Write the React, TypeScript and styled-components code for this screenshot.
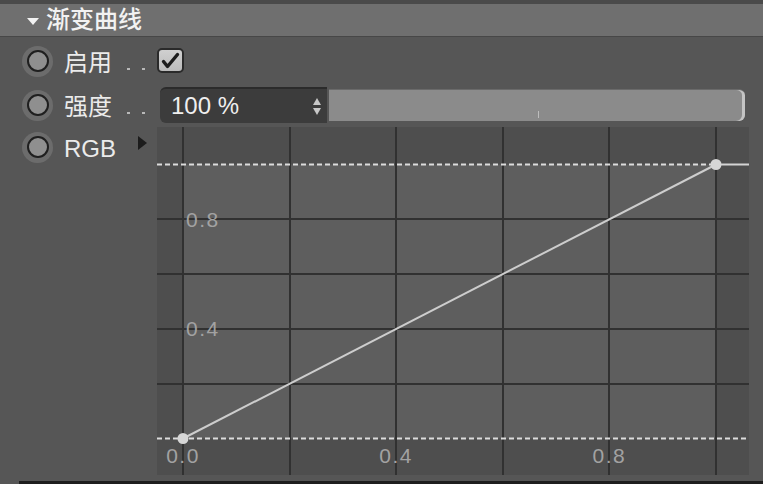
import React from "react";
import styled, { createGlobalStyle } from "styled-components";

const Global = createGlobalStyle`
  html, body { margin: 0; padding: 0; background: #565656; }
  #root { width: 763px; height: 484px; }
`;

const FONT = `"Liberation Sans", "Noto Sans CJK SC", Arial, sans-serif`;

const Panel = styled.div`
  width: 763px;
  height: 484px;
  overflow: hidden;
  background: #565656;
  border-top: 4px solid #4a4a4a;
  box-sizing: border-box;
  display: flex;
  flex-direction: column;
  font-family: ${FONT};
`;

const Header = styled.div`
  height: 32px;
  flex: none;
  background: #6f6f6f;
  border-bottom: 1px solid #474747;
  display: flex;
  align-items: center;
  padding-left: 27px;
  gap: 7px;
`;

const Caret = styled.span`
  width: 0;
  height: 0;
  border-left: 6px solid transparent;
  border-right: 6px solid transparent;
  border-top: 7px solid #f2f2f2;
  margin-top: 2px;
`;

const Title = styled.span`
  font-size: 24px;
  color: #f2f2f2;
  font-weight: 500;
  line-height: 1;
`;

const Row = styled.div<{ $h: number }>`
  display: grid;
  grid-template-columns: 157px 1fr;
  height: ${(p) => p.$h}px;
  flex: none;
`;

const ParamCell = styled.div`
  display: flex;
  align-items: center;
  padding-left: 22px;
`;

const Radio = styled.span`
  width: 31px;
  height: 31px;
  border-radius: 50%;
  background: #6c6c6c;
  display: flex;
  align-items: center;
  justify-content: center;
  flex: none;
  &::after {
    content: "";
    width: 18px;
    height: 18px;
    border-radius: 50%;
    border: 2px solid #1f1f1f;
    background: #8f8f8f;
  }
`;

const Label = styled.span<{ $w?: number }>`
  margin-left: 11px;
  width: ${(p) => p.$w ?? 48}px;
  font-size: 24px;
  line-height: 1;
  color: #ebebeb;
  white-space: nowrap;
  padding-top: 3px;
  flex: none;
`;

const Dots = styled.span`
  display: flex;
  gap: 12px;
  margin-left: 15px;
  margin-top: 16px;
  & > i {
    display: block;
    width: 3px;
    height: 2px;
    background: #b8b8b8;
  }
`;

const Arrow = styled.span`
  flex: none;
  width: 0;
  height: 0;
  border-top: 7px solid transparent;
  border-bottom: 7px solid transparent;
  border-left: 9px solid #1c1c1c;
  margin-left: 20px;
  margin-top: -8px;
`;

const ControlCell = styled.div`
  display: flex;
  align-items: center;
  padding-right: 18px;
`;

const Checkbox = styled.span`
  width: 27px;
  height: 25px;
  box-sizing: border-box;
  border: 2px solid #2a2a2a;
  border-radius: 5px;
  background: linear-gradient(#d0d0d0, #bbbbbb);
  display: flex;
  align-items: center;
  justify-content: center;
  margin-top: -2px;
`;

const ValueInput = styled.div`
  width: 167px;
  height: 36px;
  box-sizing: border-box;
  margin-left: 3px;
  background: #3c3c3c;
  border-radius: 6px 0 0 6px;
  border-top: 2px solid #2b2b2b;
  display: flex;
  align-items: center;
  padding-left: 11px;
  padding-right: 6px;
  font-size: 24px;
  color: #efefef;
`;

const ValueText = styled.span`
  flex: 1;
  line-height: 1;
`;

const Spinner = styled.span`
  display: flex;
  flex-direction: column;
  gap: 3px;
  & > i {
    display: block;
    width: 0;
    height: 0;
    border-left: 4px solid transparent;
    border-right: 4px solid transparent;
  }
  & > i:first-child { border-bottom: 7px solid #c8c8c8; }
  & > i:last-child { border-top: 7px solid #c8c8c8; }
`;

const Slider = styled.div`
  flex: 1;
  height: 32px;
  margin-left: 2px;
  box-sizing: border-box;
  background: #8b8b8b;
  border-top: 1px solid #6a6a6a;
  border-radius: 0 6px 6px 0;
  box-shadow: inset -3px 0 0 #c4c4c4;
  position: relative;
`;

const Tick = styled.span`
  position: absolute;
  left: 209px;
  top: 21px;
  width: 1px;
  height: 7px;
  background: #bdbdbd;
`;

const Lower = styled.div`
  display: grid;
  grid-template-columns: 157px 1fr;
  height: 348px;
  flex: none;
  margin-top: 2px;
`;

const SideCol = styled.div`
  display: flex;
  flex-direction: column;
`;

const GraphBox = styled.div`
  margin-right: 14px;
  background: #4e4e4e;
  & > svg { display: block; }
`;

const Footer = styled.div`
  flex: 1;
  display: flex;
  flex-direction: column;
  justify-content: flex-end;
  padding-left: 19px;
`;

const FooterBar = styled.div`
  height: 3px;
  background: #1e1e1e;
`;

const W = 592;
const H = 348;
const X0 = 26;
const X1 = 559;
const Y1 = 37.5;
const Y0 = 311.5;
const xs = Array.from({ length: 6 }, (_, i) => X0 + ((X1 - X0) * i) / 5);
const ys = Array.from({ length: 6 }, (_, i) => Y0 - ((Y0 - Y1) * i) / 5);

const Curve: React.FC = () => (
  <svg width={W} height={H} viewBox={`0 0 ${W} ${H}`}>
    <rect x={0} y={0} width={W} height={H} fill="#4e4e4e" />
    <rect x={X0} y={Y1} width={X1 - X0} height={Y0 - Y1} fill="#5e5e5e" />
    {xs.map((x, i) => (
      <line key={"v" + i} x1={Math.round(x)} x2={Math.round(x)} y1={0} y2={H} stroke="#313131" strokeWidth={2} />
    ))}
    {ys.slice(1, 5).map((y, i) => (
      <line key={"h" + i} x1={0} x2={W} y1={Math.round(y)} y2={Math.round(y)} stroke="#313131" strokeWidth={2} />
    ))}
    <line x1={0} x2={X1} y1={Y1} y2={Y1} stroke="#dcdcdc" strokeWidth={2} strokeDasharray="5 3" />
    <line x1={0} x2={W} y1={Y0} y2={Y0} stroke="#dcdcdc" strokeWidth={2} strokeDasharray="5 3" />
    <line x1={X0} y1={Y0} x2={X1} y2={Y1} stroke="#cdcdcd" strokeWidth={2} />
    <line x1={X1} y1={Y1} x2={W} y2={Y1} stroke="#d4d4d4" strokeWidth={2} />
    <circle cx={X0} cy={Y0} r={5.5} fill="#d6d6d6" />
    <circle cx={X1} cy={Y1} r={5.5} fill="#d6d6d6" />
    <g fontFamily={FONT} fontSize={21} fill="#a2a2a2" letterSpacing={1.5}>
      <text x={29} y={ys[4]} dominantBaseline="central">0.8</text>
      <text x={29} y={ys[2]} dominantBaseline="central">0.4</text>
      <text x={xs[0]} y={328} textAnchor="middle" dominantBaseline="central">0.0</text>
      <text x={xs[2]} y={328} textAnchor="middle" dominantBaseline="central">0.4</text>
      <text x={xs[4]} y={328} textAnchor="middle" dominantBaseline="central">0.8</text>
    </g>
  </svg>
);

export default function App() {
  return (
    <>
      <Global />
      <Panel>
        <Header>
          <Caret />
          <Title>渐变曲线</Title>
        </Header>
        <Row $h={48}>
          <ParamCell>
            <Radio />
            <Label>启用</Label>
            <Dots><i /><i /></Dots>
          </ParamCell>
          <ControlCell>
            <Checkbox>
              <svg width="19" height="17" viewBox="0 0 19 17">
                <path d="M2.5 9.5 L6.5 14.5 L16.5 2.5" fill="none" stroke="#1c1c1c" strokeWidth="3.4" strokeLinecap="round" strokeLinejoin="round" />
              </svg>
            </Checkbox>
          </ControlCell>
        </Row>
        <Row $h={40}>
          <ParamCell>
            <Radio />
            <Label>强度</Label>
            <Dots><i /><i /></Dots>
          </ParamCell>
          <ControlCell>
            <ValueInput>
              <ValueText>100 %</ValueText>
              <Spinner><i /><i /></Spinner>
            </ValueInput>
            <Slider>
              <Tick />
            </Slider>
          </ControlCell>
        </Row>
        <Lower>
          <SideCol>
            <Row $h={40}>
              <ParamCell>
                <Radio />
                <Label $w={54}>RGB</Label>
                <Arrow />
              </ParamCell>
            </Row>
          </SideCol>
          <GraphBox>
            <Curve />
          </GraphBox>
        </Lower>
        <Footer>
          <FooterBar />
        </Footer>
      </Panel>
    </>
  );
}
